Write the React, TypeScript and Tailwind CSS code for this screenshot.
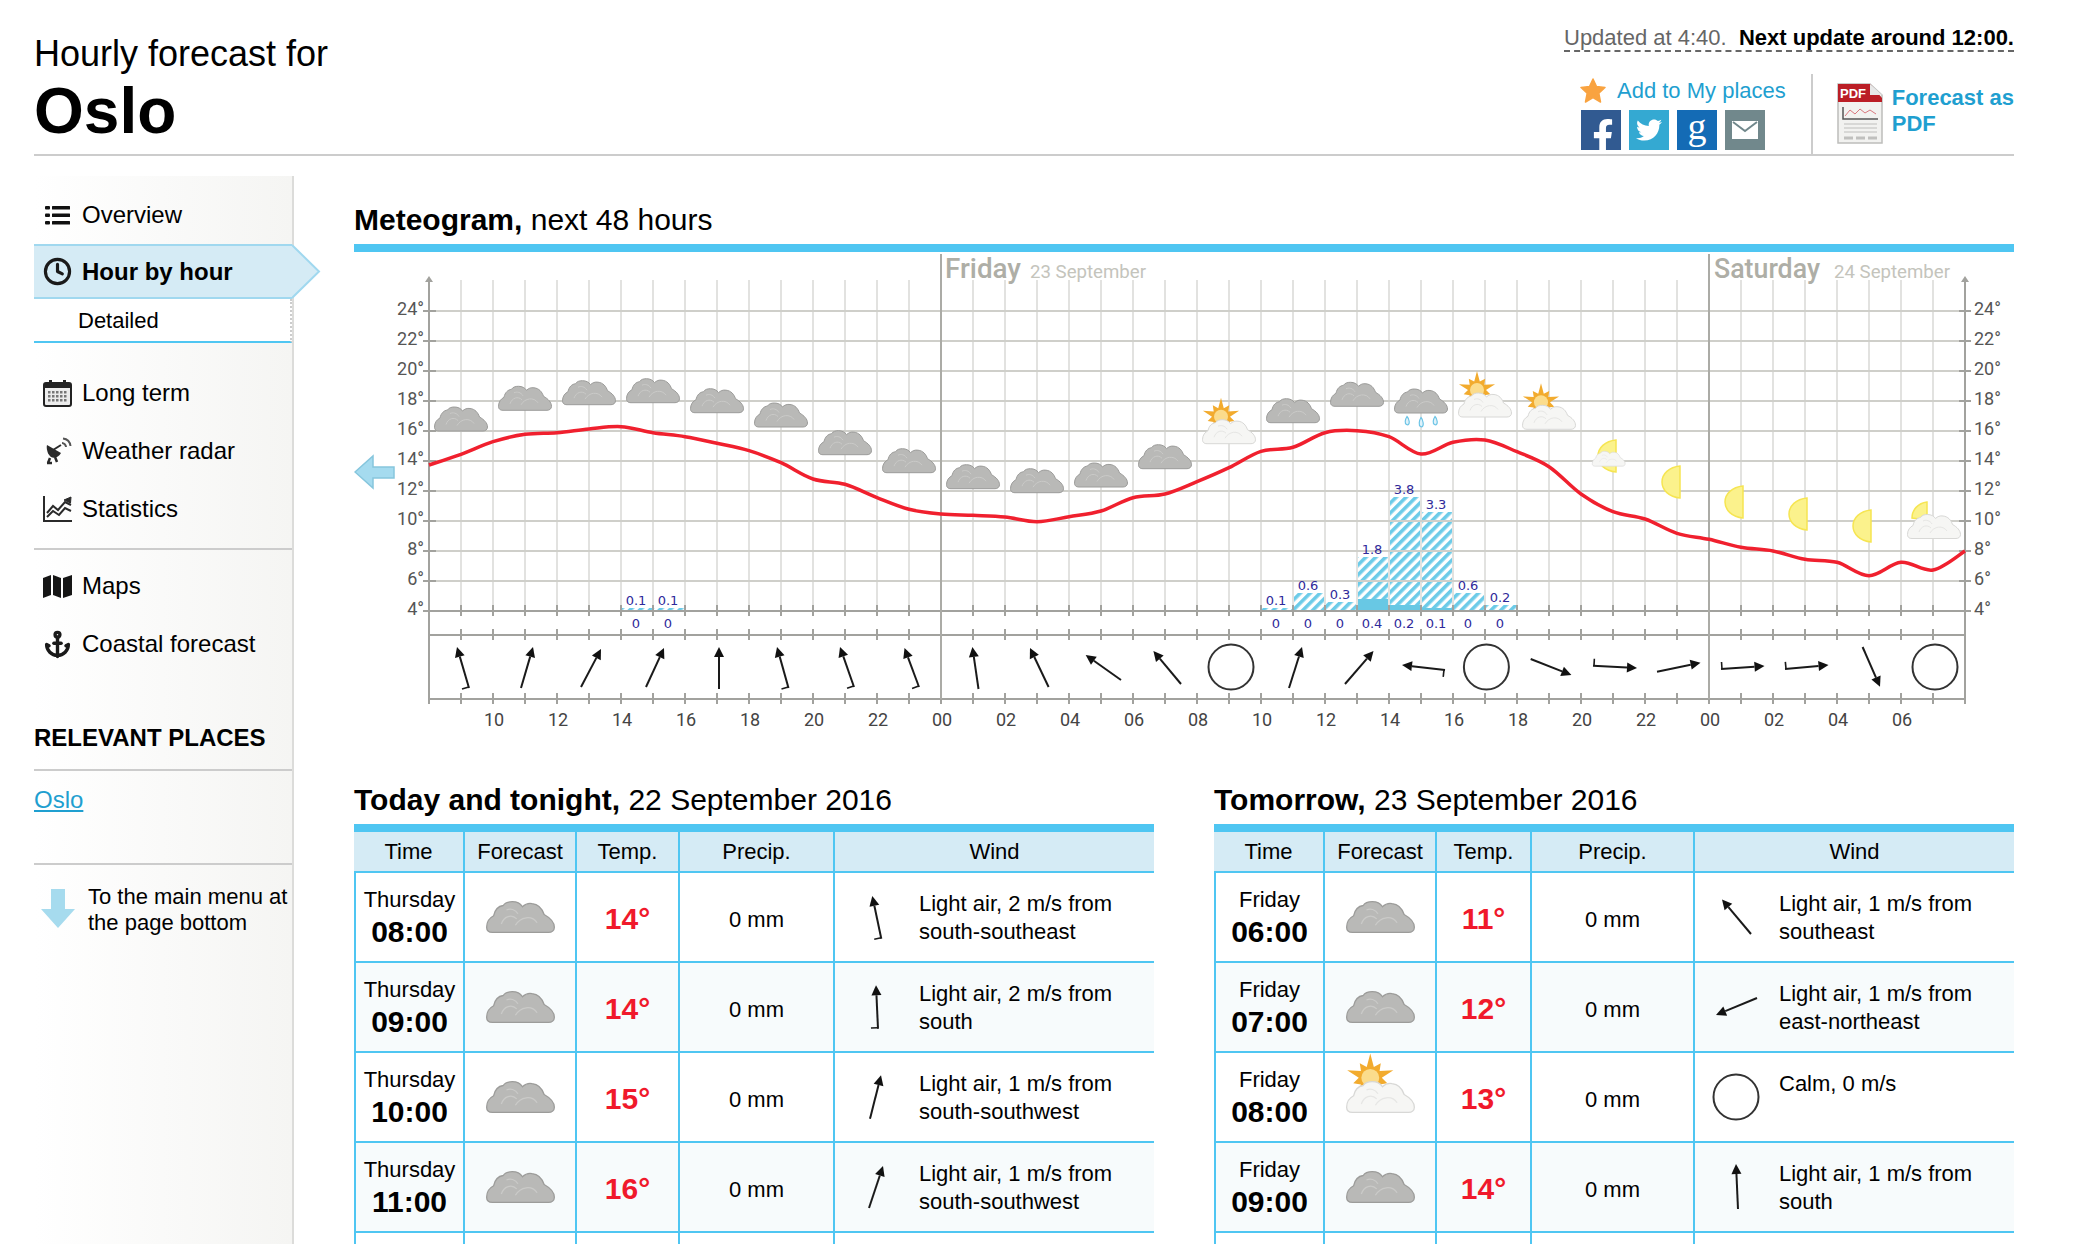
import { Anchor, Clock } from "lucide-react";
import { FaFacebookF, FaTwitter } from "react-icons/fa";

const hx = (h: number) => 429 + 32 * (h - 8);
const ty = (t: number) => 611 - (t - 4) * 15;

// temperature curve in page pixels, one point per hour from 08:00 to 08:00 two days later
const CURVE = [
  465, 454.3, 441.7, 434.3, 432.7, 429, 426.7, 432.7, 436.7, 443.3, 450.7, 462.7, 479, 484.3, 497.7, 509.3,
  514, 515.3, 517, 521.7, 516.7, 511, 497.7, 494, 481.7, 467.7, 451.3, 447.3, 432.7, 430.7, 436.7, 454, 442.3, 440,
  451.7, 466.7, 494, 511.7, 519, 533.3, 539.3, 547.3, 551, 559.3, 562.3, 575.7, 562.3, 570, 551,
];

function curvePath() {
  const p = CURVE.map((y, i) => [hx(i + 8), y]);
  let d = `M${p[0][0]} ${p[0][1]}`;
  for (let i = 0; i < p.length - 1; i++) {
    const a = p[Math.max(i - 1, 0)];
    const b = p[i];
    const c = p[i + 1];
    const e = p[Math.min(i + 2, p.length - 1)];
    d += ` C${b[0] + (c[0] - a[0]) / 6} ${b[1] + (c[1] - a[1]) / 6} ${c[0] - (e[0] - b[0]) / 6} ${c[1] - (e[1] - b[1]) / 6} ${c[0]} ${c[1]}`;
  }
  return d;
}

const CLOUDS: [number, number, "dark" | "sun" | "rain"][] = [
  [9, 419, "dark"], [11, 398.3, "dark"], [13, 392.7, "dark"], [15, 390.7, "dark"], [17, 400.7, "dark"],
  [19, 415, "dark"], [21, 442.7, "dark"], [23, 460.7, "dark"], [25, 476.7, "dark"], [27, 480.7, "dark"],
  [29, 475, "dark"], [31, 456.7, "dark"], [33, 431.7, "sun"], [35, 410.7, "dark"], [37, 394.3, "dark"],
  [39, 401, "rain"], [41, 405, "sun"], [43, 417.3, "sun"],
];

const MOONS = [
  [1680, 466], [1743, 486], [1807, 498], [1871, 510],
];

const PRECIP: [number, number, number][] = [
  [14, 0.1, 0], [15, 0.1, 0], [34, 0.1, 0], [35, 0.6, 0], [36, 0.3, 0], [37, 1.8, 0.4],
  [38, 3.8, 0.2], [39, 3.3, 0.1], [40, 0.6, 0], [41, 0.2, 0],
];

const WIND: [number, number, number, number, boolean][] = [
  [469, 688, 457, 647, true], [521, 688, 533, 647, false], [581, 687, 601, 649, false], [646, 687, 664, 648, false],
  [719, 689, 719, 647, false], [788.5, 688, 777, 647, true], [854, 687, 840, 647, true], [919, 687, 904.5, 648, true],
  [978.5, 689, 972.4, 647, false], [1048.6, 687, 1030, 648, false], [1121, 680, 1085.7, 655, false],
  [1181, 684, 1153.4, 651, false], [1289, 688, 1302, 647, false], [1345, 684, 1373.5, 651, false],
  [1445, 670, 1402, 665, true], [1530.7, 659, 1571.4, 675, false], [1593, 665.7, 1637, 668, true],
  [1657, 671.7, 1700.5, 662.7, false], [1721, 669, 1764.5, 666, true], [1785, 669, 1828.5, 665, true],
  [1862.6, 647, 1880, 686.7, false],
];

function Arrow({ x1, y1, x2, y2, barb }: { x1: number; y1: number; x2: number; y2: number; barb?: boolean }) {
  const len = Math.hypot(x2 - x1, y2 - y1);
  const dx = (x1 - x2) / len;
  const dy = (y1 - y2) / len;
  const bx = x2 + dx * 10;
  const by = y2 + dy * 10;
  const head = `${x2},${y2} ${bx - dy * 5},${by + dx * 5} ${bx + dy * 5},${by - dx * 5}`;
  return (
    <g>
      <line x1={x1} y1={y1} x2={bx} y2={by} stroke="#1a1a1a" strokeWidth="2" />
      <polygon points={head} fill="#111" />
      {barb ? <line x1={x1 - dx * 1} y1={y1 - dy * 1} x2={x1 - dx * 1 - dy * 7} y2={y1 - dy * 1 + dx * 7} stroke="#1a1a1a" strokeWidth="1.6" /> : null}
    </g>
  );
}

// 54x25 cloud, drawn with its top-left corner at 0,0
function CloudShape({ light = false }: { light?: boolean }) {
  return (
    <g>
      <path
        d="M5 24.500C1.500 24.500 .5 22.500 .5 20.500 .5 16 3 13 6 11.500 7 6.500 10 4 13.500 3.500 15 1 18 .5 20.500 .5 24 .5 27 2 28.500 4.500 30.500 2.500 33 1.500 36 2 41 2.500 44 6 45.500 10.500 50 13 53.500 16.500 53.500 20.500 53.500 23 51.500 24.500 49 24.500Z"
        fill={light ? "#f6f6f4" : "#b9b9b7"}
        stroke={light ? "#d8d8d6" : "#9c9c9a"}
        strokeWidth="1"
      />
      <path
        d="M12 18C14 12 20 10 24 14M23 19C27 12 36 11 40 17M16 7C19 5.500 23 6.500 25 10"
        fill="none"
        stroke={light ? "#e6e6e4" : "#cacac8"}
        strokeWidth="1"
      />
    </g>
  );
}

function SunRays() {
  const pts: string[] = [];
  for (let i = 0; i < 20; i++) {
    const a = (i * Math.PI) / 10 - Math.PI / 2;
    const r = i % 2 === 0 ? (i % 4 === 0 ? 19 : 14) : 9;
    pts.push(`${19 + Math.cos(a) * r},${-2.5 + Math.sin(a) * r}`);
  }
  return (
    <g>
      <polygon points={pts.join(" ")} fill="#f2ab2e" />
      <circle cx="19" cy="-2.5" r="7" fill="#fbdc8c" />
    </g>
  );
}

function CloudSun() {
  return (
    <g>
      <SunRays />
      <CloudShape light />
    </g>
  );
}

function Moon({ x, y }: { x: number; y: number }) {
  return <path d={`M${x} ${y}C${x - 11} ${y + 1} ${x - 18} ${y + 8} ${x - 18} ${y + 16}C${x - 18} ${y + 24} ${x - 11} ${y + 31} ${x} ${y + 32}Z`} fill="#fbf28c" stroke="#f6e552" strokeWidth="1.5" />;
}

function Meteogram() {
  const temps = [24, 22, 20, 18, 16, 14, 12, 10, 8, 6, 4];
  const hours = Array.from({ length: 49 }, (_, i) => i + 8);
  const font = "Roboto, sans-serif";
  return (
    <svg viewBox="354 252 1660 488" width="1660" height="488" className="block">
      <defs>
        <pattern id="hatch" patternUnits="userSpaceOnUse" width="7" height="7" patternTransform="rotate(45)">
          <rect width="3.6" height="7" fill="#6ccbe8" />
        </pattern>
      </defs>

      {PRECIP.map(([h, max, min]) => (
        <g key={h}>
          <rect x={hx(h) + 1} y={611 - max * 30} width="30" height={max * 30} fill="url(#hatch)" />
          <rect x={hx(h) + 1} y={611 - min * 30} width="30" height={min * 30} fill="#68c8e4" />
        </g>
      ))}

      {hours.map((h) => (
        <g key={h}>
          <line x1={hx(h)} y1="280" x2={hx(h)} y2="611" stroke="#dededb" strokeWidth="2" opacity="0.85" />
          <line x1={hx(h)} y1="605" x2={hx(h)} y2="616" stroke="#a2a29e" strokeWidth="2" />
          <line x1={hx(h)} y1="629" x2={hx(h)} y2="640" stroke="#a2a29e" strokeWidth="2" />
          <line x1={hx(h)} y1="693" x2={hx(h)} y2="704" stroke="#a2a29e" strokeWidth="2" />
        </g>
      ))}

      {temps.map((t) => (
        <g key={t}>
          <line x1="429" y1={ty(t)} x2="1965" y2={ty(t)} stroke={t === 4 ? "#a2a29e" : "#cfcfca"} strokeWidth="2" />
          <line x1="423" y1={ty(t)} x2="436" y2={ty(t)} stroke="#a2a29e" strokeWidth="2" />
          <line x1="1959" y1={ty(t)} x2="1971" y2={ty(t)} stroke="#a2a29e" strokeWidth="2" />
          <text x="424" y={ty(t) + 4} textAnchor="end" fontFamily={font} fontSize="18" fill="#555">{t}°</text>
          <text x="1974" y={ty(t) + 4} fontFamily={font} fontSize="18" fill="#555">{t}°</text>
        </g>
      ))}

      <line x1="429" y1="635" x2="1965" y2="635" stroke="#a2a29e" strokeWidth="2" />
      <line x1="429" y1="699" x2="1965" y2="699" stroke="#a2a29e" strokeWidth="2" />
      <line x1="429" y1="279" x2="429" y2="699" stroke="#a2a29e" strokeWidth="2" />
      <line x1="1965" y1="279" x2="1965" y2="699" stroke="#a2a29e" strokeWidth="2" />
      <polygon points="429,276 425,282 433,282" fill="#a2a29e" />
      <polygon points="1965,276 1961,282 1969,282" fill="#a2a29e" />
      <line x1="941" y1="254" x2="941" y2="699" stroke="#ababa6" strokeWidth="2" />
      <line x1="1709" y1="254" x2="1709" y2="699" stroke="#ababa6" strokeWidth="2" />

      <text x="945" y="278" fontFamily={font} fontWeight="500" fontSize="28" fill="#aeaea6" textLength="76" lengthAdjust="spacingAndGlyphs">Friday</text>
      <text x="1030" y="278" fontFamily={font} fontSize="19" fill="#c4c4bc" textLength="116" lengthAdjust="spacingAndGlyphs">23 September</text>
      <text x="1714" y="278" fontFamily={font} fontWeight="500" fontSize="28" fill="#aeaea6" textLength="106" lengthAdjust="spacingAndGlyphs">Saturday</text>
      <text x="1834" y="278" fontFamily={font} fontSize="19" fill="#c4c4bc" textLength="116" lengthAdjust="spacingAndGlyphs">24 September</text>

      {hours.filter((h) => h >= 10 && h <= 54 && h % 2 === 0).map((h) => (
        <text key={h} x={hx(h) + 1} y="726" textAnchor="middle" fontFamily={font} fontSize="18" fill="#444">
          {String(h % 24).padStart(2, "0")}
        </text>
      ))}

      {PRECIP.map(([h, max, min]) => (
        <g key={h} fontFamily="DejaVu Sans, sans-serif" fontSize="13" fill="#2f2a9a" textAnchor="middle">
          <text x={hx(h) + 15} y={611 - max * 30 - 3}>{max}</text>
          <text x={hx(h) + 15} y="628">{min}</text>
        </g>
      ))}

      <path d={curvePath()} fill="none" stroke="#f0202e" strokeWidth="3.5" strokeLinejoin="round" />

      {CLOUDS.map(([h, cy, kind]) => (
        <g key={h} transform={`translate(${hx(h) - 27} ${cy - 12.5})`}>
          {kind === "sun" ? <CloudSun /> : <CloudShape />}
          {kind === "rain" ? (
            <g fill="#dff2fa" stroke="#6cc4e6" strokeWidth="1.2">
              <path d="M13 28c-2 3-2.500 7-.5 8 2 1 3-1 2.700-3-.2-2-1.200-4-2.200-5Z" />
              <path d="M27 29c-2 3-2.500 8-.5 9 2 1 3-1 2.700-3.500-.2-2-1.200-4.500-2.200-5.500Z" />
              <path d="M41 28c-2 3-2.500 7-.5 8 2 1 3-1 2.700-3-.2-2-1.200-4-2.200-5Z" />
            </g>
          ) : null}
        </g>
      ))}

      <Moon x={1616} y={440} />
      <g transform="translate(1592 451) scale(0.62)"><CloudShape light /></g>
      {MOONS.map(([x, y]) => <Moon key={x} x={x} y={y} />)}
      <path d="M1927 502C1918 503 1912 510 1912 518L1927 520Z" fill="#fbf28c" stroke="#f6e552" strokeWidth="1.5" />
      <g transform="translate(1907 514)"><CloudShape light /></g>

      {WIND.map(([x1, y1, x2, y2, barb], i) => <Arrow key={i} x1={x1} y1={y1} x2={x2} y2={y2} barb={barb} />)}
      {[1231, 1486.400, 1935].map((x) => (
        <circle key={x} cx={x} cy="667" r="22.500" fill="none" stroke="#333" strokeWidth="2" />
      ))}

      <path d="M355 472 373 456V467H394V478H373V488Z" fill="#a5dbef" stroke="#86c6dd" strokeWidth="1.500" />
    </svg>
  );
}

type Row = {
  day: string;
  time: string;
  sun?: boolean;
  temp: string;
  text: string[];
  arrow?: [number, number, number, number, boolean];
};

const TODAY: Row[] = [
  { day: "Thursday", time: "08:00", temp: "14°", text: ["Light air, 2 m/s from", "south-southeast"], arrow: [5.3, 21.7, -3.7, -21, true] },
  { day: "Thursday", time: "09:00", temp: "14°", text: ["Light air, 2 m/s from", "south"], arrow: [2, 21.7, 0, -21.7, true] },
  { day: "Thursday", time: "10:00", temp: "15°", text: ["Light air, 1 m/s from", "south-southwest"], arrow: [-6, 21.7, 5, -21.7, false] },
  { day: "Thursday", time: "11:00", temp: "16°", text: ["Light air, 1 m/s from", "south-southwest"], arrow: [-7, 21, 7, -21, false] },
];

const TOMORROW: Row[] = [
  { day: "Friday", time: "06:00", temp: "11°", text: ["Light air, 1 m/s from", "southeast"], arrow: [15, 17, -14, -17.6, false] },
  { day: "Friday", time: "07:00", temp: "12°", text: ["Light air, 1 m/s from", "east-northeast"], arrow: [21, -9, -20, 8, false] },
  { day: "Friday", time: "08:00", sun: true, temp: "13°", text: ["Calm, 0 m/s"] },
  { day: "Friday", time: "09:00", temp: "14°", text: ["Light air, 1 m/s from", "south"], arrow: [2, 22, 0, -23, false] },
];

function ForecastTable({ title, date, rows, widths }: { title: string; date: string; rows: Row[]; widths: number[] }) {
  const head = ["Time", "Forecast", "Temp.", "Precip.", "Wind"];
  const line = "border-r-2 border-b-2 border-[#4fc6f2]";
  return (
    <div className="w-[800px]">
      <h2 className="mb-[6px] text-[30px] leading-[36px] font-normal">
        <strong>{title},</strong> {date}
      </h2>
      <div className="h-2 bg-[#4fc6f2]" />
      <table className="w-[800px] table-fixed border-separate border-spacing-0 text-[22px]">
        <colgroup>
          {widths.map((w, i) => <col key={i} style={{ width: w }} />)}
        </colgroup>
        <thead>
          <tr className="h-[41px] bg-[#d5ebf5]">
            {head.map((h, i) => (
              <th key={h} className={`font-normal text-center p-0 border-b-2 border-[#4fc6f2] ${i < 4 ? "border-r-2" : ""}`}>
                {h}
              </th>
            ))}
          </tr>
        </thead>
        <tbody>
          {rows.map((r, i) => (
            <tr key={r.time} className={`h-[90px] ${i % 2 ? "bg-[#f7fbfc]" : "bg-white"}`}>
              <td className={`${line} border-l-2 p-0 pt-[13px] align-top text-center`}>
                <div className="leading-[28px]">{r.day}</div>
                <div className="text-[30px] leading-[35px] font-bold">{r.time}</div>
              </td>
              <td className={`${line} p-0 text-center align-middle`}>
                <svg viewBox="0 0 54 25" width="69" height="32" className="mx-auto block overflow-visible">
                  {r.sun ? <CloudSun /> : <CloudShape />}
                </svg>
              </td>
              <td className={`${line} p-0 pt-[2px] text-center align-middle text-[30px] font-bold text-[#f0192b]`}>{r.temp}</td>
              <td className={`${line} p-0 pt-[5px] text-center align-middle`}>0 mm</td>
              <td className="border-b-2 border-[#4fc6f2] p-0 align-top">
                <div className="flex">
                  <svg viewBox="-30 -30 60 60" width="60" height="60" className="mt-[14px] ml-[11px] shrink-0">
                    {r.arrow ? (
                      <Arrow x1={r.arrow[0]} y1={r.arrow[1]} x2={r.arrow[2]} y2={r.arrow[3]} barb={r.arrow[4]} />
                    ) : (
                      <circle r="22.500" fill="none" stroke="#333" strokeWidth="2" />
                    )}
                  </svg>
                  <div className="ml-[13px] pt-[17px] leading-[28px]">
                    {r.text.map((t) => <div key={t}>{t}</div>)}
                  </div>
                </div>
              </td>
            </tr>
          ))}
          <tr className="h-[90px] bg-white">
            <td className={`${line} border-l-2`} />
            <td className={line} />
            <td className={line} />
            <td className={line} />
            <td className="border-b-2 border-[#4fc6f2]" />
          </tr>
        </tbody>
      </table>
    </div>
  );
}

function ListIcon() {
  return (
    <svg viewBox="0 0 25 21" width="25" height="21" fill="#111">
      <rect x="0" y="1" width="5" height="3.500" rx="1" />
      <rect x="7" y="1" width="18" height="3.500" rx=".5" />
      <rect x="0" y="8.500" width="5" height="3.500" rx="1" />
      <rect x="7" y="8.500" width="18" height="3.500" rx=".5" />
      <rect x="0" y="16" width="5" height="3.500" rx="1" />
      <rect x="7" y="16" width="18" height="3.500" rx=".5" />
    </svg>
  );
}

function CalendarIcon() {
  return (
    <svg viewBox="0 0 29 27" width="29" height="27">
      <rect x="1" y="3" width="27" height="23" rx="2" fill="#ececec" stroke="#222" strokeWidth="2" />
      <rect x="1" y="3" width="27" height="5" fill="#222" />
      <rect x="6" y="0" width="3" height="6" fill="#222" />
      <rect x="20" y="0" width="3" height="6" fill="#222" />
      <g fill="#777">
        {[11, 15, 19].map((y) => [5, 9, 13, 17, 21].map((x) => <rect key={`${x}${y}`} x={x} y={y} width="2.500" height="2.500" />))}
      </g>
    </svg>
  );
}

// dish on a small foot, with two signal arcs at the upper right
function RadarIcon() {
  return (
    <svg viewBox="0 0 28 28" width="28" height="28" fill="none">
      <path d="M3 8 17 16 C15 20 10 22 7 20 C4 18 2 12 3 8Z" fill="#2a2a2a" />
      <path d="M6 21 4 26M11 20 13 25" stroke="#2a2a2a" strokeWidth="2.500" />
      <path d="M3 26H8" stroke="#2a2a2a" strokeWidth="2.500" />
      <path d="M9 13 17 8" stroke="#2a2a2a" strokeWidth="2" />
      <path d="M18 6C20 6 22 8 22 10M19 1.500C23 2 26 5 26.500 9" stroke="#555" strokeWidth="2" />
    </svg>
  );
}

function StatsIcon() {
  return (
    <svg viewBox="0 0 29 26" width="29" height="26" fill="none" stroke="#2a2a2a">
      <path d="M1 0V25H29" strokeWidth="2" />
      <path d="M4 17 10 10 15 14 22 6 28 9" strokeWidth="2" />
      <path d="M4 21 10 15 16 19 22 12 28 15" strokeWidth="2" />
      <path d="M21 4 28 1 27.500 7Z" fill="#2a2a2a" strokeWidth="1" />
    </svg>
  );
}

function MapsIcon() {
  return (
    <svg viewBox="0 0 29 24" width="29" height="24" fill="#161616">
      <path d="M0 4 8 1V21L0 24Z" />
      <path d="M10 1 18 4V24L10 21Z" />
      <path d="M20 4 29 1V21L20 24Z" />
    </svg>
  );
}

function NavItem({ icon, label }: { icon: React.ReactNode; label: string }) {
  return (
    <div className="flex h-[58px] items-center">
      <span className="ml-[9px] flex w-[29px] shrink-0 items-center justify-center text-[#1a1a1a]">{icon}</span>
      <span className="ml-[10px]">{label}</span>
    </div>
  );
}

function Sidebar() {
  return (
    <aside className="w-[260px] shrink-0 border-r-2 border-[#dcdcda] bg-gradient-to-r from-white to-[#f5f5f3] pt-[10px] text-[24px]">
      <NavItem icon={<ListIcon />} label="Overview" />
      <div className="relative flex h-[55px] items-center border-y-2 border-[#a0d8ef] bg-[#d5ebf5] font-bold">
        <span className="ml-[9px] flex w-[29px] justify-center">
          <Clock size={29} strokeWidth={2.600} className="text-[#1a1a1a]" />
        </span>
        <span className="ml-[10px]">Hour by hour</span>
        <svg viewBox="0 0 29 55" width="29" height="55" className="absolute top-[-2px] left-full">
          <path d="M0 1 27 27.500 0 54" fill="#d5ebf5" stroke="#a0d8ef" strokeWidth="2" />
        </svg>
      </div>
      <div className="h-[44px] border-r-2 border-b-2 border-r-[#ccc] border-b-[#4fc6f2] [border-right-style:dotted] bg-white pl-[44px] text-[22px] leading-[43px]">
        Detailed
      </div>
      <div className="mt-[21px] border-b-2 border-[#ccc] pb-[10px]">
        <NavItem icon={<CalendarIcon />} label="Long term" />
        <NavItem icon={<RadarIcon />} label="Weather radar" />
        <NavItem icon={<StatsIcon />} label="Statistics" />
      </div>
      <div className="mt-[7px]">
        <NavItem icon={<MapsIcon />} label="Maps" />
        <NavItem icon={<Anchor size={29} strokeWidth={2.800} />} label="Coastal forecast" />
      </div>
      <div className="mt-[51px] border-b-2 border-[#ccc] pb-[17px] leading-[28px] font-bold">RELEVANT PLACES</div>
      <div className="border-b-2 border-[#ccc] pt-[15px] pb-[49px] leading-[28px]">
        <a className="text-[#1f9fd0] underline">Oslo</a>
      </div>
      <div className="flex pt-[19px] text-[22px] leading-[26px]">
        <svg viewBox="0 0 34 39" width="34" height="39" className="mt-[5px] ml-[7px] shrink-0">
          <path d="M10 0H24V20H34L17 39 0 20H10Z" fill="#a6dbee" />
        </svg>
        <span className="ml-[13px]">To the main menu at the page bottom</span>
      </div>
    </aside>
  );
}

function PdfIcon() {
  return (
    <svg viewBox="0 0 54 63" width="54" height="63" className="mt-[9px] shrink-0">
      <path d="M6 1H38L50 12V60H6Z" fill="#f2f2f0" stroke="#bdbdbb" strokeWidth="1.500" />
      <path d="M6 1H38L50 15V19H6Z" fill="#bb1e26" />
      <path d="M38 1V12H50Z" fill="#e8e8e8" />
      <text x="8" y="15" fontFamily="Liberation Sans, sans-serif" fontWeight="700" fontSize="13" fill="#fff">PDF</text>
      <path d="M11 24V36H46" fill="none" stroke="#555" strokeWidth="1.500" />
      <path d="M13 33 18 27 23 31 28 26 33 30 38 27 44 31" fill="none" stroke="#d8787f" strokeWidth="1" />
      <path d="M12 41H45M12 45H45M12 49H45" stroke="#cfcfcd" strokeWidth="1.500" />
      <path d="M12 55H21M24 55H33M36 55H45" stroke="#c0c0be" strokeWidth="3" />
    </svg>
  );
}

function StarIcon() {
  return (
    <svg viewBox="0 0 26 25" width="26" height="25" className="ml-[-1px] shrink-0">
      <path d="M13 1 16.500 8.500 25 9.500 18.800 15.200 20.500 24 13 19.600 5.500 24 7.200 15.200 1 9.500 9.500 8.500Z" fill="#f9a340" stroke="#f9a340" strokeLinejoin="round" strokeWidth="1.500" />
    </svg>
  );
}

function Header() {
  return (
    <header className="flex h-[156px] shrink-0 justify-between border-b-2 border-[#ccc]">
      <div className="pt-[32px]">
        <div className="text-[36px] leading-[44px]">Hourly forecast for</div>
        <h1 className="text-[64px] leading-[70px] font-bold">Oslo</h1>
      </div>
      <div className="flex w-[450px] flex-col pt-[25px] text-[22px]">
        <div className="flex h-[27px] justify-between border-b-2 border-dashed border-[#666] leading-[26px]">
          <span className="text-[#666]">Updated at 4:40.</span>
          <strong>Next update around 12:00.</strong>
        </div>
        <div className="mt-[22px] flex flex-1">
          <div className="ml-[17px] w-[230px] text-[#1f9fd0]">
            <div className="flex h-[32px] items-center">
              <StarIcon />
              <span className="ml-[11px]">Add to My places</span>
            </div>
            <div className="mt-[4px] flex gap-2 text-white">
              <span className="flex h-10 w-10 items-end justify-center overflow-hidden bg-[#315a91]">
                <FaFacebookF size={34} className="mb-[-3px] ml-[4px]" />
              </span>
              <span className="flex h-10 w-10 items-center justify-center bg-[#34a9d2]">
                <FaTwitter size={26} />
              </span>
              <span className="flex h-10 w-10 items-center justify-center bg-[#146bb5] pb-[8px] font-['Liberation_Serif',serif] text-[38px] leading-none">
                g
              </span>
              <span className="flex h-10 w-10 items-center justify-center bg-[#71888c]">
                <svg viewBox="0 0 26 18" width="26" height="18">
                  <rect width="26" height="18" fill="#fff" />
                  <path d="M1 1 13 10 25 1" fill="none" stroke="#71888c" strokeWidth="2" />
                </svg>
              </span>
            </div>
          </div>
          <div className="flex flex-1 gap-[6px] border-l-2 border-[#ccc] pl-[19px]">
            <PdfIcon />
            <a className="pt-[11px] leading-[26px] font-bold whitespace-nowrap text-[#1f9fd0]">
              Forecast as
              <br />
              PDF
            </a>
          </div>
        </div>
      </div>
    </header>
  );
}

export default function App() {
  return (
    <div className="h-[1244px] overflow-hidden bg-white font-['Liberation_Sans',Arial,sans-serif] text-black">
      <div className="ml-[34px] flex h-full w-[1980px] flex-col">
        <Header />
        <div className="mt-[20px] flex flex-1">
          <Sidebar />
          <main className="ml-[60px] w-[1660px] pt-[26px]">
            <h2 className="text-[30px] leading-[36px] font-normal">
              <strong>Meteogram,</strong> next 48 hours
            </h2>
            <div className="mt-[6px] h-2 bg-[#4fc6f2]" />
            <Meteogram />
            <div className="mt-[42px] flex gap-[60px]">
              <ForecastTable title="Today and tonight" date="22 September 2016" rows={TODAY} widths={[111, 112, 103, 155, 319]} />
              <ForecastTable title="Tomorrow" date="23 September 2016" rows={TOMORROW} widths={[111, 112, 95, 163, 319]} />
            </div>
          </main>
        </div>
      </div>
    </div>
  );
}
